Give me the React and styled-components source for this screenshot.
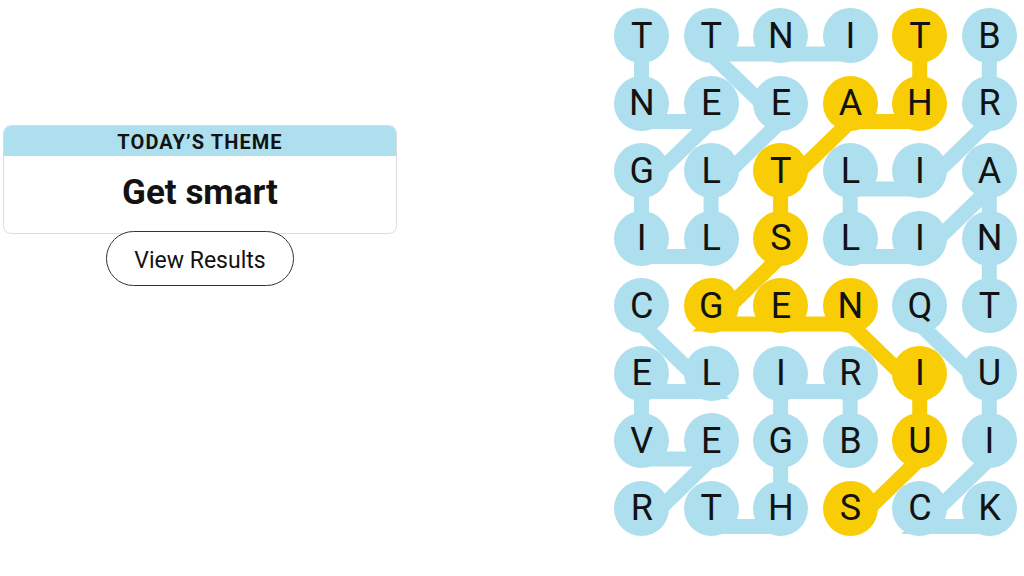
import React from "react";
import styled, { createGlobalStyle } from "styled-components";

const GlobalStyle = createGlobalStyle`
  html, body { margin: 0; padding: 0; background: #ffffff; }
  body { font-family: Roboto, "Liberation Sans", Arial, sans-serif; color: #121212; }
`;

const BLUE = "#aedfee";
const YELLOW = "#f8cd05";
const CELL = 55;
const COL_GAP = 14.56;
const ROW_GAP = 12.5;
const LINE_OFFSET = 18.5;

const LETTERS = [
  "TTNITB",
  "NEEAHR",
  "GLTLIA",
  "ILSLIN",
  "CGENQT",
  "ELIRIU",
  "VEGBUI",
  "RTHSCK",
];

const WORDS = [
  { spangram: false, cells: [[3,0],[2,0],[1,0],[2,1],[1,2],[1,3],[0,3],[0,2],[1,1],[0,1],[0,0]] },
  { spangram: false, cells: [[5,0],[5,1],[4,2],[3,2],[3,3],[4,3],[5,2],[5,3],[5,4]] },
  { spangram: false, cells: [[0,4],[1,5],[0,5],[0,6],[1,6],[0,7]] },
  { spangram: false, cells: [[3,6],[3,5],[2,5],[2,6],[2,7],[1,7]] },
  { spangram: false, cells: [[4,4],[5,5],[5,6],[4,7],[5,7]] },
  { spangram: true, cells: [[4,0],[4,1],[3,1],[2,2],[2,3],[1,4],[2,4],[3,4],[4,5],[4,6],[3,7]] },
];

const cellState = {};
WORDS.forEach((w) => w.cells.forEach(([c, r]) => { cellState[`${c}-${r}`] = w.spangram ? "span" : "found"; }));

const cx = (c) => CELL / 2 + c * (CELL + COL_GAP);
const cy = (r) => CELL / 2 + r * (CELL + ROW_GAP) + LINE_OFFSET;

const Page = styled.div`
  display: flex;
  justify-content: space-between;
  align-items: flex-start;
  padding: 8px 7px 0 3px;
`;

const Side = styled.section`
  width: 394px;
  margin-top: 117px;
  display: flex;
  flex-direction: column;
  align-items: center;
`;

const ThemeCard = styled.div`
  width: 100%;
  box-sizing: border-box;
  border: 1px solid #dcdcdc;
  border-radius: 8px;
  overflow: hidden;
  background: #fff;
`;

const ThemeHeader = styled.h1`
  margin: 0;
  height: 30px;
  padding-top: 2px;
  box-sizing: border-box;
  background: ${BLUE};
  display: flex;
  align-items: center;
  justify-content: center;
  font-size: 20px;
  font-weight: 700;
  letter-spacing: 1.1px;
  text-transform: uppercase;
  color: #121212;
`;

const ThemeBody = styled.h2`
  margin: 0;
  height: 77px;
  display: flex;
  align-items: center;
  justify-content: center;
  padding-bottom: 5px;
  box-sizing: border-box;
  font-size: 35px;
  font-weight: 700;
  color: #121212;
`;

const ResultsButton = styled.button`
  margin-top: -3px;
  width: 188px;
  height: 55px;
  padding: 3px 0 0;
  border: 1px solid #333;
  border-radius: 28px;
  background: #fff;
  font-family: inherit;
  font-size: 23px;
  font-weight: 400;
  color: #121212;
  cursor: pointer;
`;

const BoardWrap = styled.div`
  position: relative;
`;

const Lines = styled.svg`
  position: absolute;
  left: 0;
  top: 0;
  overflow: visible;
  pointer-events: none;
  z-index: 0;
`;

const Board = styled.div`
  position: relative;
  z-index: 1;
  display: grid;
  grid-template-columns: repeat(6, ${CELL}px);
  grid-template-rows: repeat(8, ${CELL}px);
  column-gap: ${COL_GAP}px;
  row-gap: ${ROW_GAP}px;
`;

const Letter = styled.button`
  width: ${CELL}px;
  height: ${CELL}px;
  border: none;
  border-radius: 50%;
  padding: 0;
  background: ${(p) => (p.$state === "span" ? YELLOW : p.$state === "found" ? BLUE : "transparent")};
  font-family: Roboto, "Liberation Sans", Arial, sans-serif;
  font-size: 36px;
  font-weight: 400;
  color: #121212;
  display: flex;
  align-items: center;
  justify-content: center;
  line-height: 1;
`;

export default function App() {
  const boardW = 6 * CELL + 5 * COL_GAP;
  const boardH = 8 * CELL + 7 * ROW_GAP;
  return (
    <>
      <GlobalStyle />
      <Page>
        <Side>
          <ThemeCard>
            <ThemeHeader>Today’s Theme</ThemeHeader>
            <ThemeBody>Get smart</ThemeBody>
          </ThemeCard>
          <ResultsButton>View Results</ResultsButton>
        </Side>
        <BoardWrap>
          <Lines width={boardW} height={boardH}>
            {WORDS.map((w, i) => (
              <polyline
                key={i}
                points={w.cells.map(([c, r]) => `${cx(c)},${cy(r)}`).join(" ")}
                fill="none"
                stroke={w.spangram ? YELLOW : BLUE}
                strokeWidth="15"
                strokeLinejoin="miter"
                strokeLinecap="butt"
                strokeMiterlimit="4"
              />
            ))}
          </Lines>
          <Board>
            {LETTERS.map((row, r) =>
              row.split("").map((ch, c) => (
                <Letter key={`${c}-${r}`} $state={cellState[`${c}-${r}`]}>
                  {ch}
                </Letter>
              ))
            )}
          </Board>
        </BoardWrap>
      </Page>
    </>
  );
}
